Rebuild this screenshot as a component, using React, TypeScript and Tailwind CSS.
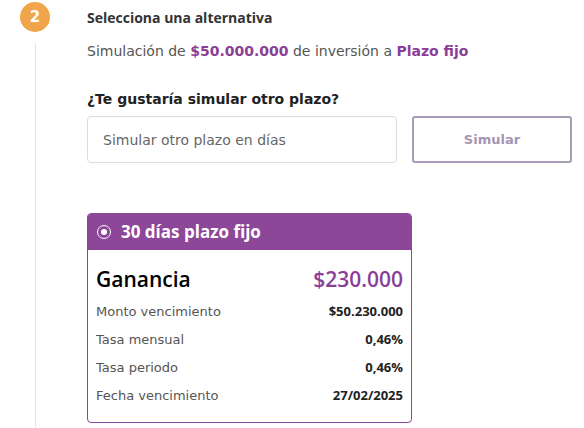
export default function App() {
  const rows = [
    { label: "Monto vencimiento", value: "$50.230.000" },
    { label: "Tasa mensual", value: "0,46%" },
    { label: "Tasa periodo", value: "0,46%" },
    { label: "Fecha vencimiento", value: "27/02/2025" },
  ];

  // Open Sans handles the heavier bits; DejaVu matches the regular widths better
  const strong = { fontFamily: '"Open Sans", "DejaVu Sans", sans-serif' };

  return (
    <div
      className="flex h-[428px] w-[584px] overflow-hidden bg-white pl-[20px] pt-[2px]"
      style={{ fontFamily: '"DejaVu Sans", "Open Sans", sans-serif' }}
    >
      {/* step marker + timeline */}
      <div className="flex w-[30px] flex-col items-center">
        <div className="flex h-[30px] w-[30px] items-center justify-center rounded-full bg-[#f0a54a] text-[15px] font-bold text-white">
          2
        </div>
        <div className="mt-[11px] w-px flex-1 bg-[#e5e5e5]" />
      </div>

      <div className="ml-[37px] flex flex-col">
        <div className="flex h-[30px] items-center text-[14px] font-bold text-[#333]" style={strong}>
          Selecciona una alternativa
        </div>

        <p className="mt-[9px] text-[14px] leading-[20px] text-[#555]">
          Simulación de <span className="font-bold text-[#8b3e97]">$50.000.000</span> de inversión a{" "}
          <span className="font-bold text-[#8b3e97]">Plazo fijo</span>
        </p>

        <p className="mt-[28px] text-[14px] font-semibold leading-[20px] text-[#222]">
          ¿Te gustaría simular otro plazo?
        </p>

        <div className="mt-[7px] flex gap-[15px]">
          <input
            className="h-[47px] w-[310px] rounded-[4px] border border-[#dcdcdc] px-[15px] text-[14px] text-[#555] placeholder:text-[#666] outline-none"
            placeholder="Simular otro plazo en días"
          />
          <button className="h-[47px] w-[160px] rounded-[3px] border-2 border-[#a79bb8] text-[13px] font-bold text-[#a594b4]">
            Simular
          </button>
        </div>

        {/* selected option */}
        <div className="mt-[50px] w-[325px] overflow-hidden rounded-[4px] border border-[#8d4799]">
          <div className="flex h-[36px] items-center gap-[10px] bg-[#8d4799] px-[9px] text-white">
            <span className="flex h-[14px] w-[14px] items-center justify-center rounded-full border-[1.5px] border-white">
              <span className="h-[6px] w-[6px] rounded-full bg-white" />
            </span>
            <span className="text-[17px] font-bold" style={strong}>
              30 días plazo fijo
            </span>
          </div>
          <div className="px-[8px] pb-[12px] pt-[16px]">
            <div className="flex h-[28px] items-center justify-between" style={strong}>
              <span className="text-[21px] font-semibold text-black">Ganancia</span>
              <span className="text-[21px] font-semibold text-[#8b3e97]">$230.000</span>
            </div>
            <div className="mt-[4px] flex flex-col">
              {rows.map((r) => (
                <div key={r.label} className="flex h-[28px] items-center justify-between">
                  <span className="text-[13px] text-[#555]">{r.label}</span>
                  <span className="text-[13px] font-bold text-[#222]" style={strong}>
                    {r.value}
                  </span>
                </div>
              ))}
            </div>
          </div>
        </div>
      </div>
    </div>
  );
}
